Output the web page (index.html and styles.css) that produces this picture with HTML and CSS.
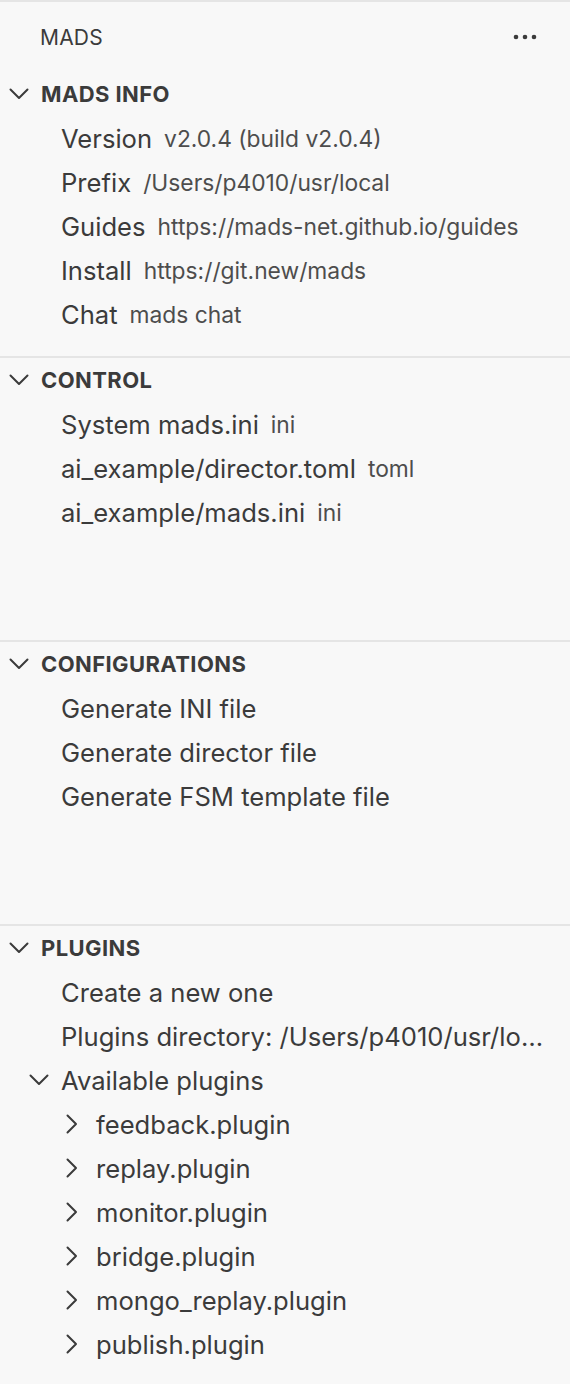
FILE: index.html
```html
<!DOCTYPE html>
<html>
<head>
<meta charset="utf-8">
<link rel="stylesheet" href="styles.css">
</head>
<body>
<div class="sidebar">
  <div class="titlebar">
    <span class="title">MADS</span>
    <span class="more"><svg width="24" height="6" viewBox="0 0 24 6"><circle cx="3" cy="3" r="2.3"/><circle cx="12" cy="3" r="2.3"/><circle cx="21" cy="3" r="2.3"/></svg></span>
  </div>

  <section class="pane first">
    <div class="pane-header"><span class="twisty"><svg class="down" viewBox="0 0 20 12"><polyline points="1.5,1.5 10,10 18.5,1.5"/></svg></span><span class="pane-title">MADS INFO</span></div>
    <div class="row l1"><span class="label">Version</span><span class="desc">v2.0.4 (build v2.0.4)</span></div>
    <div class="row l1"><span class="label">Prefix</span><span class="desc">/Users/p4010/usr/local</span></div>
    <div class="row l1"><span class="label">Guides</span><span class="desc">https://mads-net.github.io/guides</span></div>
    <div class="row l1"><span class="label">Install</span><span class="desc">https://git.new/mads</span></div>
    <div class="row l1"><span class="label">Chat</span><span class="desc">mads chat</span></div>
  </section>

  <section class="pane">
    <div class="pane-header"><span class="twisty"><svg class="down" viewBox="0 0 20 12"><polyline points="1.5,1.5 10,10 18.5,1.5"/></svg></span><span class="pane-title">CONTROL</span></div>
    <div class="row l1"><span class="label">System mads.ini</span><span class="desc">ini</span></div>
    <div class="row l1"><span class="label">ai_example/director.toml</span><span class="desc">toml</span></div>
    <div class="row l1"><span class="label">ai_example/mads.ini</span><span class="desc">ini</span></div>
  </section>

  <section class="pane">
    <div class="pane-header"><span class="twisty"><svg class="down" viewBox="0 0 20 12"><polyline points="1.5,1.5 10,10 18.5,1.5"/></svg></span><span class="pane-title">CONFIGURATIONS</span></div>
    <div class="row l1"><span class="label">Generate INI file</span></div>
    <div class="row l1"><span class="label">Generate director file</span></div>
    <div class="row l1"><span class="label">Generate FSM template file</span></div>
  </section>

  <section class="pane last">
    <div class="pane-header"><span class="twisty"><svg class="down" viewBox="0 0 20 12"><polyline points="1.5,1.5 10,10 18.5,1.5"/></svg></span><span class="pane-title">PLUGINS</span></div>
    <div class="row l1"><span class="label">Create a new one</span></div>
    <div class="row l1"><span class="label trunc">Plugins directory: /Users/p4010/usr/local/lib/mads/plugins</span></div>
    <div class="row l1n"><span class="twisty2"><svg class="down" viewBox="0 0 20 12"><polyline points="1.5,1.5 10,10 18.5,1.5"/></svg></span><span class="label">Available plugins</span></div>
    <div class="row l2"><span class="twisty3"><svg class="right" viewBox="0 0 12 20"><polyline points="1.5,1.5 10,10 1.5,18.5"/></svg></span><span class="label">feedback.plugin</span></div>
    <div class="row l2"><span class="twisty3"><svg class="right" viewBox="0 0 12 20"><polyline points="1.5,1.5 10,10 1.5,18.5"/></svg></span><span class="label">replay.plugin</span></div>
    <div class="row l2"><span class="twisty3"><svg class="right" viewBox="0 0 12 20"><polyline points="1.5,1.5 10,10 1.5,18.5"/></svg></span><span class="label">monitor.plugin</span></div>
    <div class="row l2"><span class="twisty3"><svg class="right" viewBox="0 0 12 20"><polyline points="1.5,1.5 10,10 1.5,18.5"/></svg></span><span class="label">bridge.plugin</span></div>
    <div class="row l2"><span class="twisty3"><svg class="right" viewBox="0 0 12 20"><polyline points="1.5,1.5 10,10 1.5,18.5"/></svg></span><span class="label">mongo_replay.plugin</span></div>
    <div class="row l2"><span class="twisty3"><svg class="right" viewBox="0 0 12 20"><polyline points="1.5,1.5 10,10 1.5,18.5"/></svg></span><span class="label">publish.plugin</span></div>
  </section>
</div>
</body>
</html>
```

FILE: styles.css
```css
* { box-sizing: border-box; }
html, body { margin: 0; padding: 0; }
body {
  background: #f8f8f8;
  color: #3b3b3b;
  font-family: Inter, "Noto Sans", sans-serif;
}
.sidebar {
  width: 570px;
  height: 1384px;
  display: flex;
  flex-direction: column;
  border-top: 2px solid #e5e5e5;
  overflow: hidden;
}
.titlebar {
  height: 70px;
  flex: none;
  display: flex;
  align-items: center;
  justify-content: space-between;
  padding: 0 33px 0 40px;
}
.title {
  font-size: 21px;
  letter-spacing: 0.2px;
}
.more svg { display: block; fill: #3b3b3b; }
.pane {
  height: 284px;
  flex: none;
  border-top: 2px solid #e5e5e5;
}
.pane.first { border-top: none; }
.pane.last { flex: 1; height: auto; }
.pane-header {
  height: 44px;
  display: flex;
  align-items: center;
  font-weight: 700;
  font-size: 22px;
}
.twisty {
  width: 41px;
  padding-left: 9px;
  display: flex;
  align-items: center;
}
svg.down { width: 20px; height: 12px; display: block; }
svg.right { width: 12px; height: 20px; display: block; }
svg.down polyline, svg.right polyline {
  fill: none;
  stroke: #3b3b3b;
  stroke-width: 2;
  stroke-linecap: round;
  stroke-linejoin: round;
}
.pane-title { letter-spacing: 0.4px; }
.row {
  height: 44px;
  display: flex;
  align-items: center;
  font-size: 25.6px;
  white-space: nowrap;
  padding-right: 20px;
}
.row.l1 { padding-left: 61px; }
.row.l1n { padding-left: 29px; }
.row.l2 { padding-left: 66px; }
.twisty2 { width: 32px; display: flex; align-items: center; }
.twisty3 { width: 30px; display: flex; align-items: center; }
.label { flex: none; }
.label.trunc {
  flex: 1;
  min-width: 0;
  overflow: hidden;
  text-overflow: ellipsis;
}
.desc {
  margin-left: 12px;
  font-size: 22.8px;
  opacity: 0.9;
}
```
